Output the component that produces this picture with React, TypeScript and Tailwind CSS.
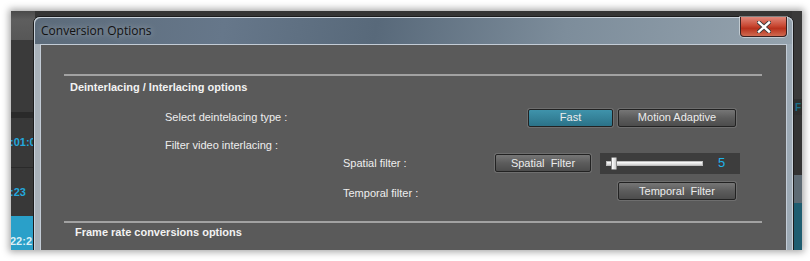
import React from "react";

const font = { fontFamily: '"Liberation Sans", Arial, sans-serif' };

function Btn({ label, w, active }: { label: string; w: string; active?: boolean }) {
  return (
    <div className="p-px rounded-[3px] bg-[#6e6e6e]">
      <div
        className={
          "h-[18px] flex items-center justify-center rounded-[2px] border border-[#222] text-[11px] text-[#ececec] whitespace-pre " +
          w +
          (active
            ? " bg-[linear-gradient(#3f93ab,#2b7288)]"
            : " bg-[linear-gradient(#767676,#5c5c5c_50%,#4c4c4c)]")
        }
      >
        {label}
      </div>
    </div>
  );
}

export default function App() {
  return (
    <div className="w-[810px] h-[261px] bg-white relative overflow-hidden" style={font}>
      {/* captured screen region */}
      <div className="absolute left-[11px] top-[11px] w-[791px] h-[239px] bg-[#353535] overflow-hidden shadow-[0_0_7px_2px_rgba(0,0,0,0.35)]">
        {/* background app left column */}
        <div className="absolute left-0 top-0 w-[24px] h-full flex flex-col">
          <div className="h-[29px] bg-[linear-gradient(#4a4a4a,#5e5e5e_30%,#575757)]" />
          <div className="h-[72px] bg-[#3a3a3a]" />
          <div className="h-[6px] bg-[#2a2a2a]" />
          <div className="h-[50px] bg-[#383838] border-b border-[#2a2a2a] flex items-center">
            <span className="text-[11px] font-bold text-[#23a8dc] -ml-[1px]">:01:0</span>
          </div>
          <div className="h-[48px] bg-[#383838] flex items-center">
            <span className="text-[11px] font-bold text-[#23a8dc] -ml-[1px]">:23</span>
          </div>
          <div className="flex-1 bg-[#2aa0c9] flex items-end pb-[1px]">
            <span className="text-[11px] font-bold text-[#d8eef6] -ml-[1px]">22:2</span>
          </div>
        </div>
        {/* background app right edge */}
        <div className="absolute right-0 top-0 w-[10px] h-full bg-[#2f2f2f] flex flex-col">
          <div className="h-[88px] bg-[#3a3a3a]" />
          <div className="h-[16px] flex items-center">
            <span className="text-[10px] font-bold text-[#1b6f8a] ml-[3px]">F</span>
          </div>
          <div className="h-[60px] bg-[#333]" />
          <div className="h-[28px] bg-[#5d6a73]" />
          <div className="flex-1 bg-[#1f5d70]" />
        </div>

        {/* dialog window */}
        <div className="absolute left-[22px] top-[5px] w-[761px] h-[250px] rounded-t-[7px] border border-[#1c1c1c] bg-[linear-gradient(90deg,#a7b0b9,#9aa7b3)]">
          <div className="relative h-full rounded-t-[6px] border border-[#c9d2db] border-b-0 flex flex-col bg-[linear-gradient(90deg,#a9b2ba,#9daab5)]">
            {/* title bar */}
            <div className="h-[26px] flex items-center pl-[6px] rounded-t-[6px] bg-[linear-gradient(100deg,#5c6b7a_0%,#66778a_25%,#58697a_45%,#7d8d9b_70%,#95a3ae_100%)]">
              <span
                className="text-[12px] text-[#111] [text-shadow:0_0_6px_rgba(255,255,255,0.5)]"
                style={{ fontFamily: '"Open Sans", "Noto Sans", sans-serif' }}
              >
                Conversion Options
              </span>
            </div>
            {/* close button */}
            <div className="absolute right-[5px] -top-[1px] w-[47px] h-[20px] rounded-b-[4px] border border-[#3a2020] border-t-0 bg-[linear-gradient(#e0877a,#c94a35_45%,#b8321e_60%,#d06a50)] flex items-center justify-center shadow-[0_0_0_1px_rgba(255,255,255,0.45)]">
              <svg width="14" height="12" viewBox="0 0 14 12">
                <path
                  d="M2 1.5 L12 10.5 M12 1.5 L2 10.5"
                  stroke="#3a3a3a"
                  strokeWidth="4.2"
                  strokeLinecap="square"
                />
                <path
                  d="M2 1.5 L12 10.5 M12 1.5 L2 10.5"
                  stroke="#ffffff"
                  strokeWidth="2.4"
                  strokeLinecap="square"
                />
              </svg>
            </div>

            {/* client area */}
            <div className="flex-1 mx-[5px] border border-[#c3ccd6] border-b-0 bg-[#5a5a5a] pl-[23px] pr-[25px] pt-[29px] flex flex-col">
              <div className="h-[2px] bg-[#a2a2a2] w-[698px]" />
              <div className="h-[22px] flex items-center pl-[6px]">
                <span className="text-[11px] font-bold text-[#f2f2f2]">
                  Deinterlacing / Interlacing options
                </span>
              </div>

              {/* Select deintelacing type */}
              <div className="flex items-center h-[21px] mt-[9px]">
                <span className="w-[463px] shrink-0 pl-[101px] text-[11px] text-[#eeeeee] whitespace-nowrap">
                  Select deintelacing type :
                </span>
                <div className="flex gap-[3px]">
                  <Btn label="Fast" w="w-[85px]" active />
                  <Btn label="Motion Adaptive" w="w-[118px]" />
                </div>
              </div>

              <div className="h-[14px] mt-[10px] flex items-center">
                <span className="pl-[101px] text-[11px] text-[#eeeeee] whitespace-nowrap">
                  Filter video interlacing :
                </span>
              </div>

              {/* Spatial filter */}
              <div className="flex items-center h-[22px]">
                <span className="w-[430px] shrink-0 pl-[279px] text-[11px] text-[#eeeeee] whitespace-nowrap">
                  Spatial filter :
                </span>
                <Btn label="Spatial  Filter" w="w-[96px]" />
                <div className="ml-[8px] w-[140px] h-[21px] bg-[#3d3d3d] flex items-center pl-[6px]">
                  <div className="relative w-[97px] h-[5px] bg-[linear-gradient(#ffffff,#cfcfcf)] border border-[#bdbdbd]">
                    <div className="absolute left-[4px] -top-[5px] w-[6px] h-[13px] bg-[linear-gradient(90deg,#ffffff,#d0d0d0)] border border-[#8a8a8a] rounded-[1px]" />
                  </div>
                  <span className="ml-[15px] text-[13px] text-[#1fb4ea]">5</span>
                </div>
              </div>

              {/* Temporal filter */}
              <div className="flex items-center h-[20px] mt-[7px]">
                <span className="w-[553px] shrink-0 pl-[279px] pt-[4px] text-[11px] text-[#eeeeee] whitespace-nowrap">
                  Temporal filter :
                </span>
                <Btn label="Temporal  Filter" w="w-[118px]" />
              </div>

              <div className="h-[2px] bg-[#a2a2a2] w-[698px] mt-[20px]" />
              <div className="h-[18px] flex items-center pl-[11px]">
                <span className="text-[11px] font-bold text-[#f2f2f2]">
                  Frame rate conversions options
                </span>
              </div>
            </div>
          </div>
        </div>
      </div>
    </div>
  );
}
